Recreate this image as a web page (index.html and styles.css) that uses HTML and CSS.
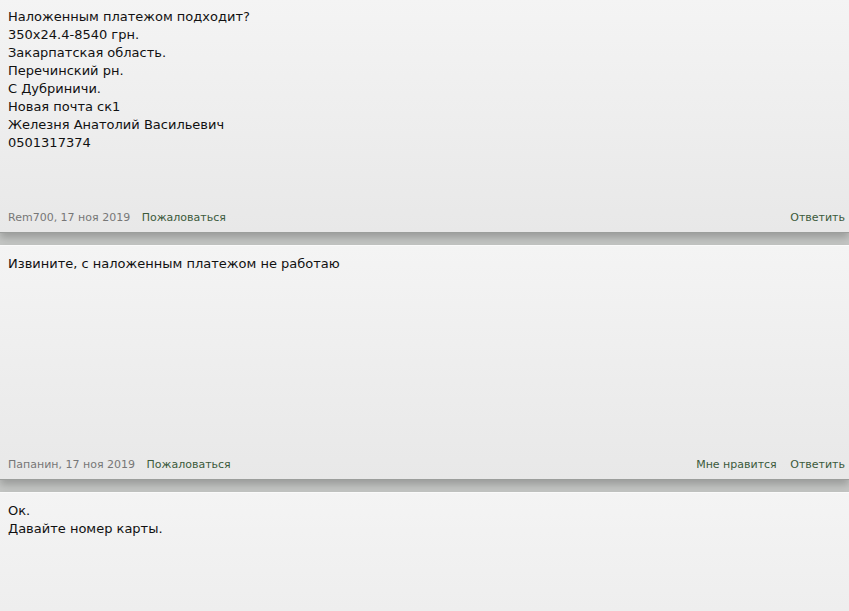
FILE: index.html
```html
<!DOCTYPE html>
<html lang="ru">
    <head>
        <meta charset="UTF-8" />
        <meta name="viewport" content="width=device-width, initial-scale=1.0" />
        <title>Обсуждение</title>
        <link rel="stylesheet" href="styles.css">
    </head>
    <body>
        <main class="thread">
            <div class="post post-first">
                <div class="post-body">
                    Наложенным платежом подходит?<br>
                    350x24.4-8540 грн.<br>
                    Закарпатская область.<br>
                    Перечинский рн.<br>
                    С Дубриничи.<br>
                    Новая почта ск1<br>
                    Железня Анатолий Васильевич<br>
                    0501317374
                </div>
                <div class="post-meta">
                    <span>
                        <span class="author">Rem700, 17 ноя 2019</span>
                        <a href="#">Пожаловаться</a>
                    </span>
                    <span class="actions">
                        <a href="#">Ответить</a>
                    </span>
                </div>
            </div>
            <div class="post">
                <div class="post-body">
                    Извините, с наложенным платежом не работаю
                </div>
                <div class="post-meta">
                    <span>
                        <span class="author">Папанин, 17 ноя 2019</span>
                        <a href="#">Пожаловаться</a>
                    </span>
                    <span class="actions">
                        <a href="#">Мне нравится</a>
                        <a href="#">Ответить</a>
                    </span>
                </div>
            </div>
            <div class="post">
                <div class="post-body">
                    Ок.<br>
                    Давайте номер карты.
                </div>
            </div>
        </main>
    </body>
</html>
```

FILE: styles.css
```css
* {
    box-sizing: border-box;
}
body {
    margin: 0;
    background-color: #c6c8c6;
    color: #111;
    font-family: "DejaVu Sans", Verdana, sans-serif;
    font-size: 13px;
    line-height: 18px;
}
.thread {
    display: flex;
    flex-direction: column;
    gap: 12px;
}
.post {
    display: flex;
    flex-direction: column;
    justify-content: space-between;
    min-height: 235px;
    padding: 9px 4px 5px 8px;
    background: linear-gradient(#f4f4f4, #e8e8e8);
    border-top: 1px solid #fafafa;
    border-bottom: 1px solid #9c9e9c;
    box-shadow: 0 5px 8px rgba(0, 0, 0, 0.22);
}
.post-first {
    margin-top: -2px;
}
.post-body {
    word-break: break-word;
}
.post-meta {
    display: flex;
    justify-content: space-between;
    font-size: 11px;
    line-height: 18px;
}
.author {
    color: #777;
    margin-right: 8px;
}
.post-meta a {
    color: #3b5a3b;
    text-decoration: none;
}
.actions a {
    margin-left: 10px;
}
```
